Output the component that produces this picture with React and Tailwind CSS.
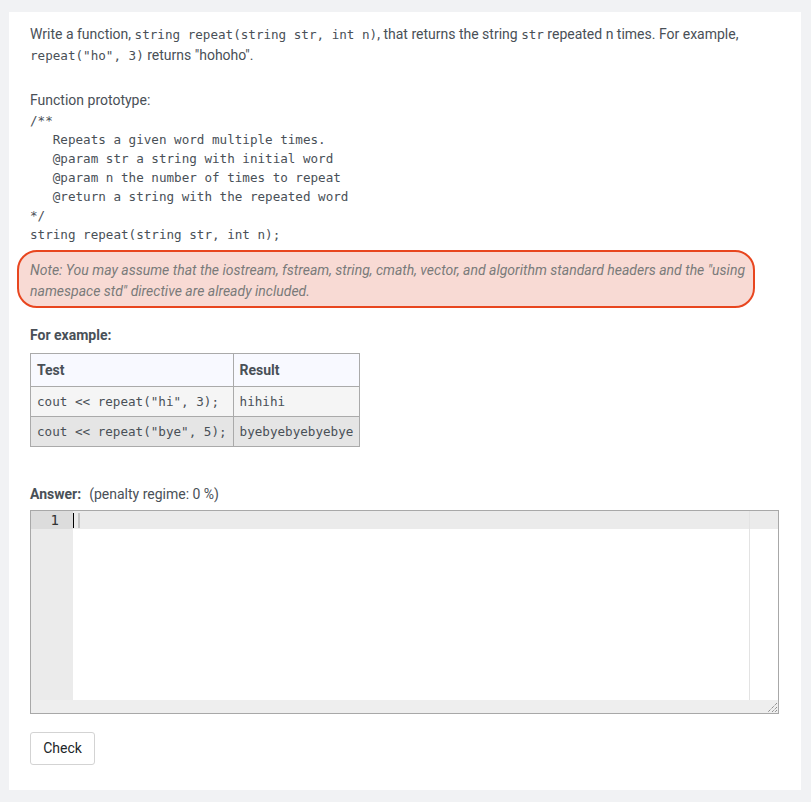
import React from 'react';

const mono = "font-['DejaVu_Sans_Mono',monospace]";

const App = () => {
  return (
    <div className="min-h-[802px] bg-[#f1f2f4] pt-[12px] pl-[9px] pr-[10px] pb-[13px] font-['Roboto',sans-serif] text-[14px] leading-[21px] text-[#495057]">
      <div className="bg-white pl-[21px] pr-[22px] pt-[12px] pb-[25px]">
        {/* Question text */}
        <p>
          Write a function, <code className={`${mono} text-[12.6px]`}>string repeat(string str, int n)</code>, that returns the string{' '}
          <code className={`${mono} text-[12.6px]`}>str</code> repeated n times. For example,{' '}
          <code className={`${mono} text-[12.6px]`}>repeat("ho", 3)</code> returns "hohoho".
        </p>

        <p className="mt-[24px]">Function prototype:</p>
        <pre className={`${mono} text-[12.6px] leading-[19px] text-[#495057]`}>
{`/**
   Repeats a given word multiple times.
   @param str a string with initial word
   @param n the number of times to repeat
   @return a string with the repeated word
*/
string repeat(string str, int n);`}
        </pre>

        {/* Note */}
        <div className="ml-[-13px] mt-[6px] w-[738px] rounded-[20px] border-2 border-[#e8461f] bg-[#f8dad4] pl-[11px] pr-[2px] pt-[8px] pb-[4px] italic text-[#7a7a7a]">
          Note: You may assume that the iostream, fstream, string, cmath, vector, and algorithm standard headers and the "using namespace std" directive are already included.
        </div>

        {/* Example */}
        <p className="mt-[17px] font-bold">For example:</p>
        <table className="mt-[7px] table-fixed border-collapse">
          <thead>
            <tr className="bg-[#f8f9ff]">
              <th className="h-[33px] w-[202px] border border-[#aaaaaa] px-[6px] text-left font-bold">Test</th>
              <th className="h-[33px] w-[126px] border border-[#aaaaaa] px-[6px] text-left font-bold">Result</th>
            </tr>
          </thead>
          <tbody className={`${mono} text-[12.6px]`}>
            <tr className="bg-[#f5f5f5]">
              <td className="h-[30px] border border-[#aaaaaa] px-[6px] whitespace-pre">cout &lt;&lt; repeat("hi", 3);</td>
              <td className="h-[30px] border border-[#aaaaaa] px-[6px]">hihihi</td>
            </tr>
            <tr className="bg-[#e5e5e5]">
              <td className="h-[30px] border border-[#aaaaaa] px-[6px] whitespace-pre">cout &lt;&lt; repeat("bye", 5);</td>
              <td className="h-[30px] border border-[#aaaaaa] px-[6px]">byebyebyebyebye</td>
            </tr>
          </tbody>
        </table>

        {/* Answer */}
        <p className="mt-[37px]">
          <span className="font-bold">Answer:</span>
          <span className="ml-[8px]">(penalty regime: 0 %)</span>
        </p>
        <div className="relative mt-[5px] flex h-[204px] w-[749px] flex-col border border-[#a8a8a8] bg-white">
          <div className="flex flex-1">
            <div className="w-[42px] bg-[#ebebeb]">
              <div className={`${mono} h-[18px] bg-[#dcdcdc] pr-[14px] text-right text-[14px] leading-[18px] text-[#333]`}>1</div>
            </div>
            <div className="relative flex-1">
              <div className="flex h-[18px] items-center bg-[#ebebeb]">
                <div className="h-[15px] w-px bg-black" />
                <div className="ml-[4px] h-[15px] w-[2px] bg-[#c4c4c4]" />
              </div>
              <div className="absolute top-0 bottom-0 left-[676px] w-px bg-[#e3e3e3]" />
            </div>
          </div>
          <div className="relative h-[13px] bg-[#eeeeee]">
            <svg className="absolute right-[1px] bottom-[1px]" width="9" height="9" viewBox="0 0 9 9">
              <path d="M9 0 L0 9 M9 4 L4 9 M9 7 L7 9" stroke="#666" strokeWidth="1" strokeDasharray="1 1" />
            </svg>
          </div>
        </div>

        {/* Check */}
        <button className="mt-[18px] h-[33px] w-[65px] rounded-[3px] border border-[#d3d3d3] bg-white text-[14px] text-[#212529]">
          Check
        </button>
      </div>
    </div>
  );
};

export default App;
